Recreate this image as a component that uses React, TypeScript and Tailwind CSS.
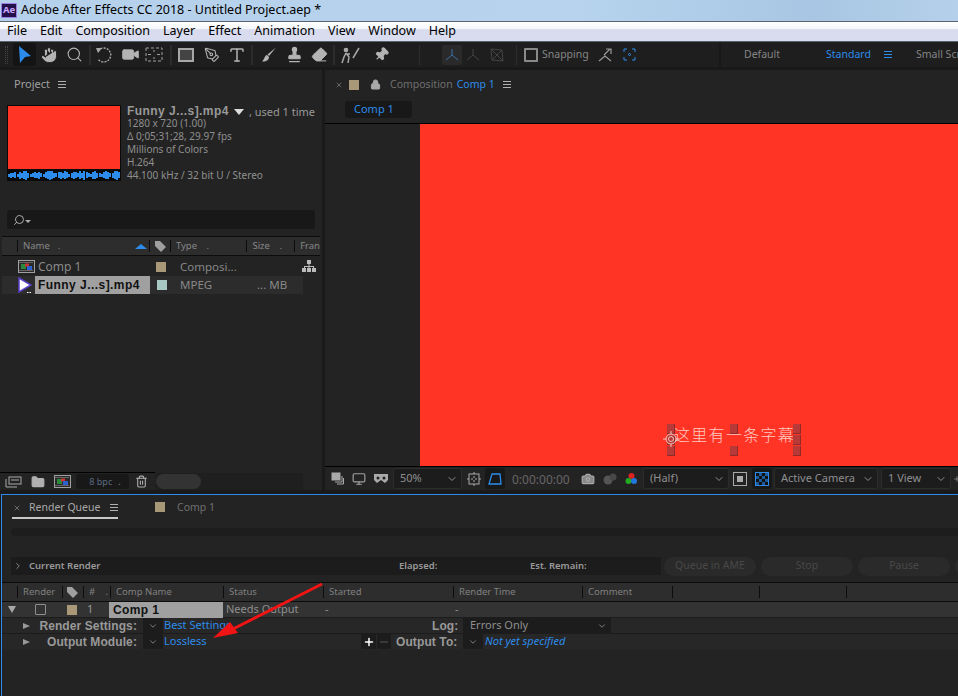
import { Camera, ChevronDown, ChevronRight, Folder, Hand, Lock, Monitor, PenTool, Plus, Search, Stamp, Trash2, Type, X, Minus, Eraser, Pin, Video } from 'lucide-react';

const ft = 'font-["Noto_Sans",sans-serif]';

function Burger({ blue = false }: { blue?: boolean }) {
  return (
    <span className="flex w-[8px] shrink-0 flex-col gap-[2px]">
      <span className={`h-px ${blue ? 'bg-[#2d8ceb]' : 'bg-[#b0b0b0]'}`} />
      <span className={`h-px ${blue ? 'bg-[#2d8ceb]' : 'bg-[#b0b0b0]'}`} />
      <span className={`h-px ${blue ? 'bg-[#2d8ceb]' : 'bg-[#b0b0b0]'}`} />
    </span>
  );
}

function Divider({ className }: { className: string }) {
  return <span className={`h-[20px] w-[2px] shrink-0 bg-[#2c2c2c] ${className}`} />;
}

function Tool({ children, w = 25 }: { children: React.ReactNode; w?: number }) {
  return <span className="flex shrink-0 items-center justify-center" style={{ width: w }}>{children}</span>;
}

function FilmIcon({ className = '' }: { className?: string }) {
  return (
    <svg className={`shrink-0 ${className}`} width="17" height="13" viewBox="0 0 17 13">
      <rect x="0.5" y="0.5" width="16" height="12" fill="#2a2a2a" stroke="#a0a0a0" />
      <path d="M1.5 2.5h14M1.5 10.5h14" stroke="#a0a0a0" strokeDasharray="1 1" />
      <rect x="3" y="4" width="5" height="5" fill="#2a8a3a" />
      <rect x="7" y="3.5" width="4" height="3" fill="#c33" />
      <rect x="9" y="6" width="5" height="4" fill="#2d5fd0" />
    </svg>
  );
}

function Toolbar() {
  return (
    <div className="h-[28px] overflow-hidden bg-[#191919]">
      <div className="flex h-[25px] items-center overflow-hidden bg-[#1e1e1e] pl-[5px] text-[#b4b4b4]">
        <span className="mr-[5px] h-[18px] w-[3px] shrink-0 border-x border-dotted border-[#444]" />
        <span className="flex h-[23px] w-[23px] shrink-0 items-center justify-center rounded-[3px] bg-[#141414]">
          <svg width="14" height="18" viewBox="0 0 14 18"><path d="M1 0 L13 10 L7 11 L2 17 Z" fill="#2d8ceb" /></svg>
        </span>
        <Tool w={26}><Hand size={18} fill="#b4b4b4" stroke="#1e1e1e" strokeWidth={1.2} /></Tool>
        <Tool><Search size={17} strokeWidth={1.5} /></Tool>
        <Divider className="ml-[2px] mr-[1px]" />
        <Tool w={24}>
          <svg width="18" height="18" viewBox="0 0 18 18" fill="none" stroke="#a8a8a8" strokeWidth="1.4"><path d="M3 5 A7 7 0 1 1 3 13" strokeDasharray="2 1.2" /><path d="M1 2 L7 2 L3 7 Z" fill="#a8a8a8" stroke="none" /></svg>
        </Tool>
        <Tool w={28}><Video size={19} fill="#b4b4b4" strokeWidth={1} /></Tool>
        <Tool w={20}>
          <svg width="18" height="15" viewBox="0 0 18 15" fill="none" stroke="#a0a0a0"><rect x="1" y="1" width="16" height="13" strokeDasharray="3 2" /><path d="M3 7.5h3M12 7.5h3M9 3v2M9 10v2" /></svg>
        </Tool>
        <Divider className="mx-[6px]" />
        <Tool w={16}><span className="h-[14px] w-[16px] shrink-0 border-2 border-[#a8a8a8] bg-[#444]" /></Tool>
        <Tool w={36}><PenTool size={16} strokeWidth={1.6} /></Tool>
        <Tool w={14}><Type size={18} strokeWidth={2} className="shrink-0" /></Tool>
        <Divider className="mx-[7px]" />
        <Tool w={18}>
          <svg width="16" height="16" viewBox="0 0 16 16"><path d="M15 0.5 L8 9 L6.5 7.5 Z" fill="#b4b4b4" /><path d="M6 8 C3.5 8.5 4 11.5 1 14.5 C5 15 8 13 8 10 Z" fill="#b4b4b4" /></svg>
        </Tool>
        <Tool w={32}><Stamp size={17} fill="#b4b4b4" strokeWidth={1.6} /></Tool>
        <Tool w={18}><Eraser size={17} fill="#b4b4b4" strokeWidth={1.4} className="shrink-0" /></Tool>
        <Divider className="mx-[5px]" />
        <Tool w={22}>
          <svg width="20" height="18" viewBox="0 0 20 18" fill="none" stroke="#a8a8a8" strokeWidth="1.5"><circle cx="5" cy="4" r="1.6" fill="#a8a8a8" /><path d="M5 7 L3 11 L1 17M5 7 L8 11 L7 17M5 8 L9 8M12 12 L18 2" /></svg>
        </Tool>
        <Tool w={38}><Pin size={15} fill="#b4b4b4" className="rotate-45" /></Tool>
        <span className="ml-[19px] mr-[22px] h-[20px] w-[1px] shrink-0 bg-[#2c2c2c]" />
        <span className="flex h-[20px] w-[20px] shrink-0 items-center justify-center rounded-[2px] bg-[#2a2a2a]">
          <svg width="16" height="16" viewBox="0 0 16 16" fill="none" stroke="#3a6ea8"><path d="M8 8V2M8 8L2 13M8 8L14 13" /></svg>
        </span>
        <Tool w={22}><svg width="14" height="14" viewBox="0 0 14 14" fill="none" stroke="#444"><path d="M7 7V1M7 7L1 12M7 7L13 12" /></svg></Tool>
        <Tool w={26}><svg width="14" height="14" viewBox="0 0 14 14" fill="none" stroke="#444"><path d="M1 1L12 2L13 13L2 12ZM1 1L13 13M12 2L2 12" /></svg></Tool>
        <span className="ml-[6px] mr-[7px] h-[20px] w-[1px] shrink-0 bg-[#2c2c2c]" />
        <span className="h-[14px] w-[14px] shrink-0 rounded-[1px] border-2 border-[#8a8a8a]" />
        <span className="ml-[4px] w-[45px] shrink-0 text-[10.5px] text-[#858585]">Snapping</span>
        <Tool w={36}>
          <svg width="14" height="14" viewBox="0 0 14 14" fill="none" stroke="#999" strokeWidth="1.2"><path d="M1 13L7 8L13 13M6 7L12 1M8 1H13V6" /></svg>
        </Tool>
        <Tool w={12}>
          <svg className="shrink-0" width="13" height="13" viewBox="0 0 13 13" fill="none" stroke="#2d8ceb"><path d="M1 4V1H4M9 1H12V4M12 9V12H9M4 12H1V9" /><circle cx="6.5" cy="6.5" r="1" /></svg>
        </Tool>
        <span className="ml-[84px] h-[25px] w-[2px] shrink-0 bg-[#181818]" />
        <span className="ml-[23px] w-[82px] shrink-0 text-[10.5px] text-[#858585]">Default</span>
        <span className="w-[58px] shrink-0 text-[10.5px] text-[#2d8ceb]">Standard</span>
        <Burger blue />
        <span className="ml-[24px] shrink-0 whitespace-nowrap text-[10.5px] text-[#858585]">Small Screen</span>
      </div>
    </div>
  );
}

function ProjectPanel() {
  const base = [3, 5, 4, 6, 3, 7, 5, 8, 9, 5, 3, 4, 6, 5, 7, 4, 3, 6, 8, 9, 8, 5, 4, 6, 7, 5, 8, 6, 3, 5, 7, 6, 4, 8, 5, 9, 6, 4, 3, 7, 8, 5, 4, 3, 6, 8, 7, 4, 5, 8, 9, 6];
  return (
    <div className="flex h-[420px] w-[322px] shrink-0 flex-col bg-[#232323]">
      <div className="flex h-[25px] shrink-0 items-center gap-[8px] pt-[3px] pl-[14px] text-[11px] text-[#a0a0a0]">
        Project <Burger />
      </div>
      <div className="ml-[7px] mt-[10px] flex h-[105px] shrink-0 gap-[6px]">
        <div className="h-[76px] w-[114px] shrink-0 border border-[#0a0a0a] bg-[#0a0a0a]">
          <div className="h-[63px] bg-[#ff3424]" />
          <div className="flex h-[12px] items-center justify-between">
            {base.map((b, i) => <span key={i} className="w-[2px] bg-[#2d8ceb]" style={{ height: b }} />)}
          </div>
        </div>
        <div className="min-w-0 text-[10px] leading-[13px] text-[#8f8f8f]">
          <div className="mb-[-1px] flex h-[13px] items-center whitespace-nowrap text-[11px] leading-[13px] text-[#999]">
            <b className='font-["Liberation_Sans",sans-serif] text-[12px] leading-[13px] tracking-[0.45px]'>Funny J...s].mp4</b>
            <span className="mx-[5px] h-0 w-0 border-x-[5px] border-t-[6px] border-x-transparent border-t-[#ddd]" />
            , used 1 time
          </div>
          <div className="h-[13px] overflow-visible leading-[12px]">1280 x 720 (1.00)</div>
          <div>Δ 0;05;31;28, 29.97 fps</div>
          <div>Millions of Colors</div>
          <div>H.264</div>
          <div>44.100 kHz / 32 bit U / Stereo</div>
        </div>
      </div>
      <div className="ml-[7px] flex h-[19px] w-[308px] shrink-0 items-center rounded-[3px] bg-[#181818] pl-[6px] text-[#aaa]">
        <Search size={12} className="-scale-x-100" />
        <span className="mt-[3px] h-0 w-0 border-x-[3px] border-t-[3px] border-x-transparent border-t-[#aaa]" />
      </div>
      <div className="ml-[2px] mt-[7px] flex h-[20px] w-[318px] shrink-0 items-center border-y border-[#0c0c0c] bg-[#2d2d2d] text-[9.5px] text-[#888]">
        <span className="ml-[15px] flex h-[12px] w-[133px] items-center border-l border-[#0c0c0c] pl-[5px]">
          Name
          <span className="ml-[8px]">.</span>
          <span className="ml-auto mr-[2px] h-0 w-0 border-x-[6px] border-b-[5px] border-x-transparent border-b-[#2d8ceb]" />
        </span>
        <span className="flex h-[12px] w-[21px] items-center justify-center border-l border-[#0c0c0c]">
          <svg width="13" height="13" viewBox="0 0 13 13"><path d="M1 1H6L12 7L7 12L1 6Z" fill="#a0a0a0" /></svg>
        </span>
        <span className="h-[12px] w-[77px] border-l border-[#0c0c0c] pl-[5px] leading-[12px]">Type <span className="ml-[7px]">.</span></span>
        <span className="h-[12px] w-[48px] border-l border-[#0c0c0c] pl-[5px] leading-[12px]">Size <span className="ml-[7px]">.</span></span>
        <span className="h-[12px] border-l border-[#0c0c0c] pl-[5px] leading-[12px]">Fran</span>
      </div>
      <div className="flex h-[20px] shrink-0 items-center pt-[1px] text-[12px] text-[#888]">
        <FilmIcon className="ml-[18px]" />
        <span className="ml-[3px] w-[118px]">Comp 1</span>
        <span className="h-[10px] w-[10px] bg-[#a89878]" />
        <span className="ml-[14px] w-[122px] text-[11.5px]">Composi...</span>
        <svg width="14" height="13" viewBox="0 0 14 13" fill="#bbb"><rect x="5" y="0" width="4" height="4" /><rect x="0" y="8" width="4" height="4" /><rect x="5" y="8" width="4" height="4" /><rect x="10" y="8" width="4" height="4" /><path d="M6.5 4h1v2H12v2h-1V7H7.5v1h-1V7H3v1H2V6h4.5z" /></svg>
      </div>
      <div className="ml-[2px] flex h-[18px] w-[301px] shrink-0 items-center bg-[#2c2c2c] text-[12px] text-[#888]">
        <svg className="ml-[16px] mt-[1px] shrink-0" width="15" height="17" viewBox="0 0 15 17">
          <path d="M1 1L13 8L1 15Z" fill="#fff" stroke="#5a3ec8" strokeWidth="1.5" />
          <path d="M9 15.5h1.5M11.5 15.5H13" stroke="#fff" />
        </svg>
        <span className='ml-[2px] w-[115px] shrink-0 whitespace-nowrap bg-[#a0a0a0] pl-[3px] font-["Liberation_Sans",sans-serif] text-[12px] font-bold leading-[18px] tracking-[0.45px] text-[#111]'>Funny J...s].mp4</span>
        <span className="ml-[7px] h-[10px] w-[10px] bg-[#a8c8c4]" />
        <span className="ml-[13px] w-[77px] text-[11.5px]">MPEG</span>
        <span className="text-[11.5px]">... MB</span>
      </div>
      <div className="flex-1" />
      <div className="flex h-[18px] shrink-0 items-center">
        <div className="flex h-[18px] w-[155px] items-center border-t border-black pl-[5px] text-[#b0b0b0]">
          <svg className="shrink-0" width="17" height="12" viewBox="0 0 17 12" fill="none" stroke="#aaa"><rect x="4" y="1" width="12" height="7" /><path d="M1 3V11H12M6 4h8" /></svg>
          <Folder size={14} fill="#b0b0b0" className="ml-[9px] shrink-0" />
          <FilmIcon className="ml-[9px]" />
          <span className="ml-[5px] flex h-[15px] w-[53px] shrink-0 items-center justify-center rounded-[3px] bg-[#181818] pl-[5px] text-[9px] text-[#5a6a80]">8 bpc<span className="ml-[6px] text-[#888]">.</span></span>
          <Trash2 size={13} className="ml-[6px] shrink-0" />
        </div>
        <div className="flex h-[17px] w-[148px] items-center bg-[#1f1f1f] pl-[1px]">
          <span className="h-[15px] w-[45px] rounded-full bg-[#333]" />
        </div>
      </div>
    </div>
  );
}

function Drop({ w, label, className = '' }: { w: number; label: string; className?: string }) {
  return (
    <span className={`flex h-[21px] shrink-0 items-center rounded-[3px] border border-[#2c2c2c] bg-[#1c1c1c] pl-[6px] pr-[3px] text-[11px] text-[#8f8f8f] ${className}`} style={{ width: w }}>
      {label}
      <ChevronDown size={12} className="ml-auto" />
    </span>
  );
}

function ViewerPanel() {
  const handles = [[247, 300], [247, 311], [247, 322], [310, 300], [310, 322], [373, 300], [373, 311], [373, 322]];
  return (
    <div className="flex h-[420px] min-w-0 flex-1 flex-col bg-[#232323]">
      <div className="flex h-[25px] shrink-0 items-center pl-[10px] pt-[4px] text-[10.5px]">
        <X size={8} className="text-[#888]" />
        <span className="ml-[6px] h-[10px] w-[10px] bg-[#a89878]" />
        <Lock size={11} className="ml-[11px] text-[#aaa]" fill="#aaa" />
        <span className="ml-[9px] text-[#6f6f6f]">Composition</span>
        <span className="ml-[4px] text-[#2d8ceb]">Comp 1</span>
        <span className="ml-[8px]"><Burger /></span>
      </div>
      <div className="ml-[20px] mt-[6px] flex h-[17px] w-[67px] shrink-0 items-center rounded-[3px] bg-[#181818] pl-[9px] text-[11px] text-[#2d8ceb]">Comp 1</div>
      <div className="relative mt-[5px] h-[343px] shrink-0 border-t border-black pl-[95px]">
        <div className="relative h-full bg-[#ff3424]">
          <div className="absolute left-[252px] top-[299px] flex h-[26px] w-[128px] items-center font-['Liberation_Serif','Noto_Sans_CJK_SC',serif] text-[16px] font-light text-[#ffc9c0]">
            <span className="ml-[2px] whitespace-nowrap tracking-[1.3px]">这里有一条字幕</span>
          </div>
          {/* selection handles around the caption */}
          {handles.map(([x, y]) => (
            <span key={`${x}-${y}`} className="absolute h-[10px] w-[8px] border-b border-r border-[#8e2a28] bg-[#b83a38]" style={{ left: x, top: y }} />
          ))}
          <svg className="absolute left-[243px] top-[307px]" width="16" height="16" viewBox="0 0 16 16" fill="none" stroke="#f3c8c0">
            <circle cx="8" cy="8" r="5" /><circle cx="8" cy="8" r="2.5" /><path d="M0 8h3M13 8h3M8 0v3M8 13v3" />
          </svg>
        </div>
      </div>
      <div className="flex h-[24px] shrink-0 items-center border-t border-black pl-[6px] text-[#a0a0a0]">
        <svg className="shrink-0" width="13" height="13" viewBox="0 0 13 13" fill="none" stroke="#aaa"><rect x="1" y="1" width="8" height="7" fill="#aaa" /><path d="M11 4V10H4M12.5 6V12H6" /></svg>
        <Monitor size={14} className="ml-[8px] shrink-0" />
        <svg className="ml-[7px] shrink-0" width="16" height="12" viewBox="0 0 16 12"><path d="M1 1H15V7L12 10L8 7L4 10L1 7Z" fill="#aaa" /><circle cx="5" cy="5" r="1.5" fill="#222" /><circle cx="11" cy="5" r="1.5" fill="#222" /></svg>
        <Drop w={69} label="50%" className="ml-[4px]" />
        <svg className="ml-[5px] shrink-0" width="14" height="14" viewBox="0 0 14 14" fill="none" stroke="#aaa"><rect x="2" y="2" width="10" height="10" /><path d="M7 0v14M0 7h14" strokeDasharray="2 2" /></svg>
        <span className="ml-[4px] flex h-[21px] w-[20px] shrink-0 items-center justify-center rounded-[3px] bg-[#181818]">
          <svg width="14" height="14" viewBox="0 0 14 14" fill="none" stroke="#2d8ceb" strokeWidth="1.3"><path d="M4 2H12L13 12H1Z" /></svg>
        </span>
        <span className="ml-[7px] mt-[3px] w-[69px] shrink-0 text-[12px] text-[#666]">0:00:00:00</span>
        <Camera size={14} className="shrink-0 text-[#aaa]" fill="#888" />
        <svg className="ml-[8px] shrink-0" width="14" height="14" viewBox="0 0 14 14"><circle cx="5" cy="8" r="4.5" fill="#555" /><circle cx="10" cy="5" r="3.5" fill="#484848" /></svg>
        <svg className="ml-[8px] shrink-0" width="13" height="14" viewBox="0 0 13 14"><circle cx="6.5" cy="4" r="3" fill="#d22" /><circle cx="3.5" cy="9" r="3" fill="#2a2" /><circle cx="9" cy="9" r="3" fill="#27d" /></svg>
        <Drop w={86} label="(Half)" className="ml-[5px]" />
        <span className="ml-[4px] flex h-[14px] w-[14px] shrink-0 items-center justify-center border border-[#aaa]"><span className="h-[6px] w-[6px] bg-[#aaa]" /></span>
        <span className="ml-[5px] flex h-[21px] w-[20px] shrink-0 items-center justify-center rounded-[3px] bg-[#181818]">
          <span className="h-[14px] w-[14px] border border-[#2d8ceb] bg-[repeating-conic-gradient(#1c5c9c_0_25%,#111_0_50%)] bg-[length:6px_6px]" />
        </span>
        <Drop w={104} label="Active Camera" className="ml-[2px]" />
        <Drop w={70} label="1 View" className="ml-[3px]" />
        <Plus size={8} className="ml-[2px] shrink-0" />
      </div>
    </div>
  );
}

function Ctl({ label }: { label: string }) {
  return <span className="flex h-[19px] w-[92px] shrink-0 items-center justify-center rounded-full bg-[#2a2a2a] text-[10.5px] text-[#484848]">{label}</span>;
}

function ColHead({ w, label, children }: { w: number; label?: string; children?: React.ReactNode }) {
  return <span className="flex h-[12px] shrink-0 items-center border-l border-[#0c0c0c] pl-[5px]" style={{ width: w }}>{label}{children}</span>;
}

const labelCls = 'font-["Liberation_Sans",sans-serif] text-[12px] tracking-[0.1px] text-[#999]';

function RenderQueue() {
  return (
    <div className="ml-px mt-[4px] flex h-[202px] flex-col overflow-hidden border-l border-t border-[#2d8ceb] bg-[#232323] text-[#8f8f8f]">
      <div className="flex h-[24px] shrink-0 items-center">
        <span className="ml-[10px] flex h-[24px] w-[106px] shrink-0 items-center border-b-2 border-[#c8c8c8] pt-[3px]">
          <X size={8} className="ml-[1px] shrink-0" />
          <span className="ml-[8px] w-[70px] shrink-0 whitespace-nowrap text-[10.5px] text-[#a8a8a8]">Render Queue</span>
          <span className="ml-[11px]"><Burger /></span>
        </span>
        <span className="ml-[37px] h-[10px] w-[10px] bg-[#a89878]" />
        <span className="ml-[12px] pt-[1px] text-[10.5px] text-[#707070]">Comp 1</span>
      </div>
      <div className="ml-[9px] mt-[9px] h-[8px] shrink-0 rounded-l-full bg-[#1d1d1d]" />
      <div className="mt-[21px] flex h-[18px] shrink-0 items-center">
        <div className="ml-[9px] flex h-[18px] w-[650px] shrink-0 items-center bg-[#1c1c1c] text-[9.5px] font-semibold text-[#999]">
          <ChevronRight size={10} className="ml-[2px]" />
          <span className="ml-[6px] w-[370px]">Current Render</span>
          <span className="w-[131px]">Elapsed:</span>
          <span>Est. Remain:</span>
        </div>
        <div className="ml-[3px] flex gap-[5px]">
          <Ctl label="Queue in AME" />
          <Ctl label="Stop" />
          <Ctl label="Pause" />
          <Ctl label="" />
        </div>
      </div>
      <div className="mt-[7px] flex h-[20px] shrink-0 items-center border-y border-[#0c0c0c] bg-[#2d2d2d] text-[9.5px] text-[#808080]">
        <span className="ml-[15px]" />
        <ColHead w={45} label="Render" />
        <ColHead w={21}>
          <svg className="-ml-[2px] shrink-0" width="13" height="13" viewBox="0 0 13 13"><path d="M1 1H6L12 7L7 12L1 6Z" fill="#a0a0a0" /></svg>
        </ColHead>
        <ColHead w={27} label="#"><span className="ml-auto mr-[2px]">.</span></ColHead>
        <ColHead w={113} label="Comp Name" />
        <ColHead w={100} label="Status" />
        <ColHead w={130} label="Started" />
        <ColHead w={129} label="Render Time" />
        <ColHead w={90} label="Comment" />
        <ColHead w={87} />
        <ColHead w={87} />
        <ColHead w={87} />
      </div>
      <div className="flex h-[16px] shrink-0 items-center border-b border-[#1c1c1c] bg-[#333] text-[11px] text-[#8f8f8f]">
        <span className="ml-[6px] h-0 w-0 border-x-[4px] border-t-[7px] border-x-transparent border-t-[#a8a8a8]" />
        <span className="ml-[19px] h-[11px] w-[11px] rounded-[1px] border border-[#8f8f8f]" />
        <span className="ml-[21px] h-[10px] w-[10px] bg-[#a89878]" />
        <span className="ml-[10px] w-[22px] text-[#999]">1</span>
        <span className='w-[114px] bg-[#a0a0a0] pl-[4px] font-["Liberation_Sans",sans-serif] text-[12px] font-bold leading-[16px] tracking-[0.4px] text-[#111]'>Comp 1</span>
        <span className="ml-[3px] w-[99px] text-[11px]">Needs Output</span>
        <span className="w-[130px]">-</span>
        <span>-</span>
      </div>
      <div className="flex h-[16px] shrink-0 items-center border-b border-[#1c1c1c] bg-[#272727] text-[11px]">
        <span className="ml-[21px] h-0 w-0 border-y-[3.5px] border-l-[7px] border-y-transparent border-l-[#999]" />
        <b className={`ml-[7px] w-[100px] text-right ${labelCls}`}>Render Settings:</b>
        <span className="ml-[6px] flex h-[15px] w-[20px] items-center justify-center bg-[#1c1c1c]"><ChevronDown size={10} /></span>
        <span className="ml-[1px] w-[268px] text-[#2d8ceb]">Best Settings</span>
        <b className={`w-[24px] ${labelCls}`}>Log:</b>
        <span className="ml-[7px] flex h-[15px] w-[148px] items-center bg-[#1c1c1c] pl-[7px] pr-[4px]">Errors Only<ChevronDown size={10} className="ml-auto" /></span>
      </div>
      <div className="flex h-[16px] shrink-0 items-center border-b border-[#262626] bg-[#272727] text-[11px]">
        <span className="ml-[21px] h-0 w-0 border-y-[3.5px] border-l-[7px] border-y-transparent border-l-[#999]" />
        <b className={`ml-[7px] w-[100px] text-right ${labelCls}`}>Output Module:</b>
        <span className="ml-[6px] flex h-[15px] w-[20px] items-center justify-center bg-[#1c1c1c]"><ChevronDown size={10} /></span>
        <span className="ml-[1px] w-[197px] text-[#2d8ceb]">Lossless</span>
        <span className="flex h-[15px] w-[15px] items-center justify-center bg-[#1c1c1c] text-white"><Plus size={12} strokeWidth={3} /></span>
        <span className="ml-px flex h-[15px] w-[14px] items-center justify-center bg-[#1c1c1c] text-[#444]"><Minus size={12} strokeWidth={3} /></span>
        <b className={`ml-[5px] w-[61px] whitespace-nowrap ${labelCls}`}>Output To:</b>
        <span className="ml-[6px] flex h-[15px] w-[20px] items-center justify-center bg-[#1c1c1c]"><ChevronDown size={10} /></span>
        <span className="ml-[2px] italic text-[#2d8ceb]">Not yet specified</span>
      </div>
    </div>
  );
}

export default function App() {
  return (
    <div className={`relative h-[696px] w-[958px] overflow-hidden bg-[#1a1a1a] ${ft}`}>
      <div className="flex h-[21px] items-center bg-[linear-gradient(90deg,#b5d0ea,#b7d3ee_60%,#a8c6e3_85%,#b5d0ea)] pl-[1px] text-black">
        <span className="flex h-[15px] w-[16px] items-center justify-center rounded-[1px] border border-[#9a7fe0] bg-[#24104a] text-[9.5px] font-bold text-[#c9a8ff]">Ae</span>
        <span className="ml-[4px] whitespace-nowrap text-[12.5px]">Adobe After Effects CC 2018 - Untitled Project.aep *</span>
      </div>
      <div className="flex h-[21px] items-center gap-[13px] border-y border-[#5a6470] bg-[linear-gradient(#ffffff_0%,#f4f7fb_35%,#d8dcee_40%,#d8dcee_100%)] pl-[7px] text-[12.5px] text-black">
        {['File', 'Edit', 'Composition', 'Layer', 'Effect', 'Animation', 'View', 'Window', 'Help'].map((m) => (
          <span key={m}>{m}</span>
        ))}
      </div>
      <Toolbar />
      <div className="flex gap-[3px]">
        <ProjectPanel />
        <ViewerPanel />
      </div>
      <RenderQueue />
      {/* red annotation arrow drawn over the queue */}
      <svg className="absolute left-[200px] top-[575px]" width="130" height="70" viewBox="0 0 130 70">
        <path d="M122 9 L33 54" stroke="#f01414" strokeWidth="3" />
        <path d="M13 63 L30 47 L38 58 Z" fill="#f01414" />
      </svg>
    </div>
  );
}
